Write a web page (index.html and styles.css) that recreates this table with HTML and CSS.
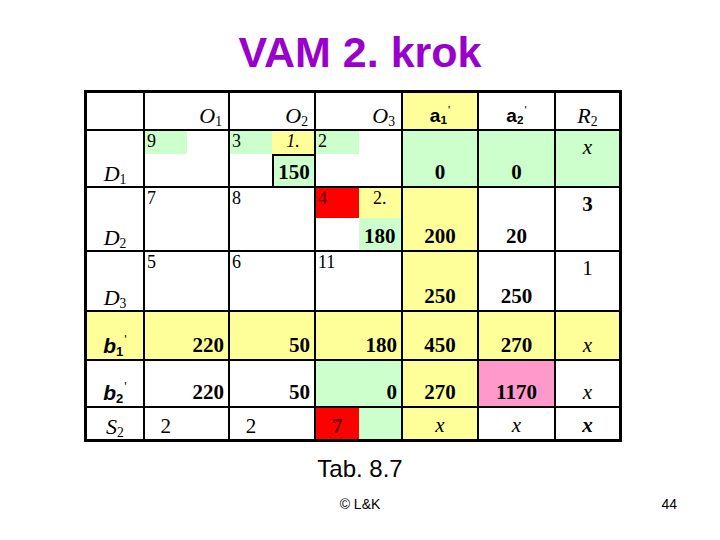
FILE: index.html
```html
<!DOCTYPE html>
<html lang="cs">

<head>
    <meta charset="UTF-8">
    <meta name="viewport" content="width=device-width, initial-scale=1.0">
    <title>VAM 2. krok</title>
    <link rel="stylesheet" href="styles.css">
</head>

<body>
    <h1 class="title">VAM 2. krok</h1>

    <div class="vam">
        <!-- header row -->
        <div class="cell"></div>
        <div class="cell head-o"><span><i>O</i><sub>1</sub></span></div>
        <div class="cell head-o"><span><i>O</i><sub>2</sub></span></div>
        <div class="cell head-o"><span><i>O</i><sub>3</sub></span></div>
        <div class="cell head-a yellow"><span>a<sub>1</sub><sup>'</sup></span></div>
        <div class="cell head-a"><span>a<sub>2</sub><sup>'</sup></span></div>
        <div class="cell head-r"><span><i>R</i><sub>2</sub></span></div>

        <!-- D1 -->
        <div class="cell label"><span><i>D</i><sub>1</sub></span></div>
        <div class="cell split d1">
            <span class="cost green">9</span>
        </div>
        <div class="cell split d1">
            <span class="cost green">3</span>
            <span class="step yellow"><i>1.</i></span>
            <span class="alloc num green boxed">150</span>
        </div>
        <div class="cell split d1">
            <span class="cost green">2</span>
        </div>
        <div class="cell num bc green">0</div>
        <div class="cell num bc green">0</div>
        <div class="cell tc green"><i class="ex">x</i></div>

        <!-- D2 -->
        <div class="cell label"><span><i>D</i><sub>2</sub></span></div>
        <div class="cell split d2">
            <span class="cost">7</span>
        </div>
        <div class="cell split d2">
            <span class="cost">8</span>
        </div>
        <div class="cell split d2">
            <span class="cost red">4</span>
            <span class="step yellow">2.</span>
            <span class="alloc num green">180</span>
        </div>
        <div class="cell num bc yellow">200</div>
        <div class="cell num bc">20</div>
        <div class="cell num tc">3</div>

        <!-- D3 -->
        <div class="cell label"><span><i>D</i><sub>3</sub></span></div>
        <div class="cell split d2">
            <span class="cost">5</span>
        </div>
        <div class="cell split d2">
            <span class="cost">6</span>
        </div>
        <div class="cell split d2">
            <span class="cost">11</span>
        </div>
        <div class="cell num bc yellow">250</div>
        <div class="cell num bc">250</div>
        <div class="cell tc plain">1</div>

        <!-- b1' -->
        <div class="cell label bold yellow"><span><i>b</i><sub>1</sub><sup>'</sup></span></div>
        <div class="cell num br yellow">220</div>
        <div class="cell num br yellow">50</div>
        <div class="cell num br yellow">180</div>
        <div class="cell num bc yellow">450</div>
        <div class="cell num bc yellow">270</div>
        <div class="cell bc yellow"><i class="ex">x</i></div>

        <!-- b2' -->
        <div class="cell label bold"><span><i>b</i><sub>2</sub><sup>'</sup></span></div>
        <div class="cell num br">220</div>
        <div class="cell num br">50</div>
        <div class="cell num br green">0</div>
        <div class="cell num bc yellow">270</div>
        <div class="cell num bc pink">1170</div>
        <div class="cell bc"><i class="ex">x</i></div>

        <!-- S2 -->
        <div class="cell label"><span><i>S</i><sub>2</sub></span></div>
        <div class="cell split s2">
            <span class="half">2</span>
        </div>
        <div class="cell split s2">
            <span class="half">2</span>
        </div>
        <div class="cell split s2">
            <span class="half num red">7</span>
            <span class="half green"></span>
        </div>
        <div class="cell bc yellow"><i class="ex">x</i></div>
        <div class="cell bc"><i class="ex">x</i></div>
        <div class="cell bc"><i class="ex bold">x</i></div>
    </div>

    <div class="caption">Tab. 8.7</div>

    <div class="footer">
        <span></span>
        <span class="copy">&copy; L&amp;K</span>
        <span class="page">44</span>
    </div>
</body>

</html>
```

FILE: styles.css
```css
* {
    margin: 0;
    padding: 0;
    box-sizing: border-box;
}

body {
    width: 720px;
    height: 540px;
    overflow: hidden;
    background: #FFFFFF;
    color: #000000;
    font-family: "Liberation Sans", Arial, sans-serif;
}

.title {
    margin-top: 28px;
    text-align: center;
    font-size: 43px;
    line-height: 49px;
    font-weight: bold;
    color: #9900CC;
}

/* the table is a grid on black, the gaps are the lines */
.vam {
    display: grid;
    grid-template-columns: 56px 83px 84px 85px 74px 75px 63px;
    grid-template-rows: 36px 55px 62px 58px 47px 45px 31px;
    gap: 2px;
    padding: 3px;
    width: 538px;
    margin: 13px 0 0 84px;
    background: #000000;
    font-family: "Liberation Serif", "Times New Roman", serif;
}

.cell {
    display: flex;
    min-width: 0;
    background: #FFFFFF;
}

.yellow {
    background: #FFFF99;
}

.green {
    background: #CCFFCC;
}

.red {
    background: #FF0000;
    color: #660000;
}

.pink {
    background: #FF99CC;
}

.num {
    font-weight: bold;
    font-size: 21px;
    line-height: 24px;
}

.bold {
    font-weight: bold;
}

/* alignments */
.br {
    justify-content: flex-end;
    align-items: flex-end;
    padding: 0 4px 2px 0;
}

.bc {
    justify-content: center;
    align-items: flex-end;
    padding-bottom: 2px;
}

.tc {
    justify-content: center;
    align-items: flex-start;
    padding-top: 4px;
}

.plain {
    font-size: 21px;
    line-height: 24px;
}

.ex {
    font-size: 21px;
    line-height: 24px;
}

sub {
    font-size: 0.62em;
    vertical-align: -0.2em;
    line-height: 0;
    font-style: normal;
}

sup {
    font-family: "Liberation Sans", Arial, sans-serif;
    font-size: 0.6em;
    font-weight: normal;
    font-style: normal;
    vertical-align: 0.7em;
    line-height: 0;
    margin-left: 1px;
}

/* header */
.head-o {
    justify-content: flex-end;
    align-items: flex-end;
    padding: 0 6px 1px 0;
    font-size: 22px;
    line-height: 24px;
}

.head-a {
    justify-content: center;
    align-items: flex-end;
    padding-bottom: 1px;
    font-family: "Liberation Sans", Arial, sans-serif;
    font-weight: bold;
    font-size: 19px;
    line-height: 24px;
}

.head-r {
    justify-content: center;
    align-items: flex-end;
    padding-bottom: 1px;
    font-size: 22px;
    line-height: 24px;
}

.label {
    justify-content: center;
    align-items: flex-end;
    font-size: 22px;
    line-height: 24px;
}

.label.bold {
    font-family: "Liberation Sans", Arial, sans-serif;
    font-size: 21px;
    padding-bottom: 1px;
}

/* cells with cost, step and allocation */
.split {
    display: grid;
    grid-template-columns: 1fr 1fr;
}

.split.d1 {
    grid-template-rows: 23px 1fr;
}

.split.d2 {
    grid-template-rows: 30px 1fr;
}

.split.s2 {
    grid-template-rows: 1fr;
}

.cost {
    grid-column: 1;
    grid-row: 1;
    padding-left: 2px;
    font-size: 18px;
    line-height: 21px;
}

.step {
    grid-column: 2;
    grid-row: 1;
    text-align: center;
    font-size: 18px;
    line-height: 21px;
}

.alloc {
    grid-column: 2;
    grid-row: 2;
    display: flex;
    justify-content: center;
    align-items: flex-end;
    padding-bottom: 2px;
}

.boxed {
    border-left: 2px solid #000000;
    border-top: 2px solid #000000;
}

.half {
    display: flex;
    justify-content: center;
    align-items: flex-end;
    padding-bottom: 1px;
    font-size: 21px;
    line-height: 24px;
}

.caption {
    margin-top: 13px;
    text-align: center;
    font-size: 24px;
    line-height: 28px;
}

.footer {
    display: grid;
    grid-template-columns: 1fr auto 1fr;
    margin-top: 13px;
    font-size: 14px;
    line-height: 16px;
}

.page {
    justify-self: end;
    padding-right: 43px;
}
```
